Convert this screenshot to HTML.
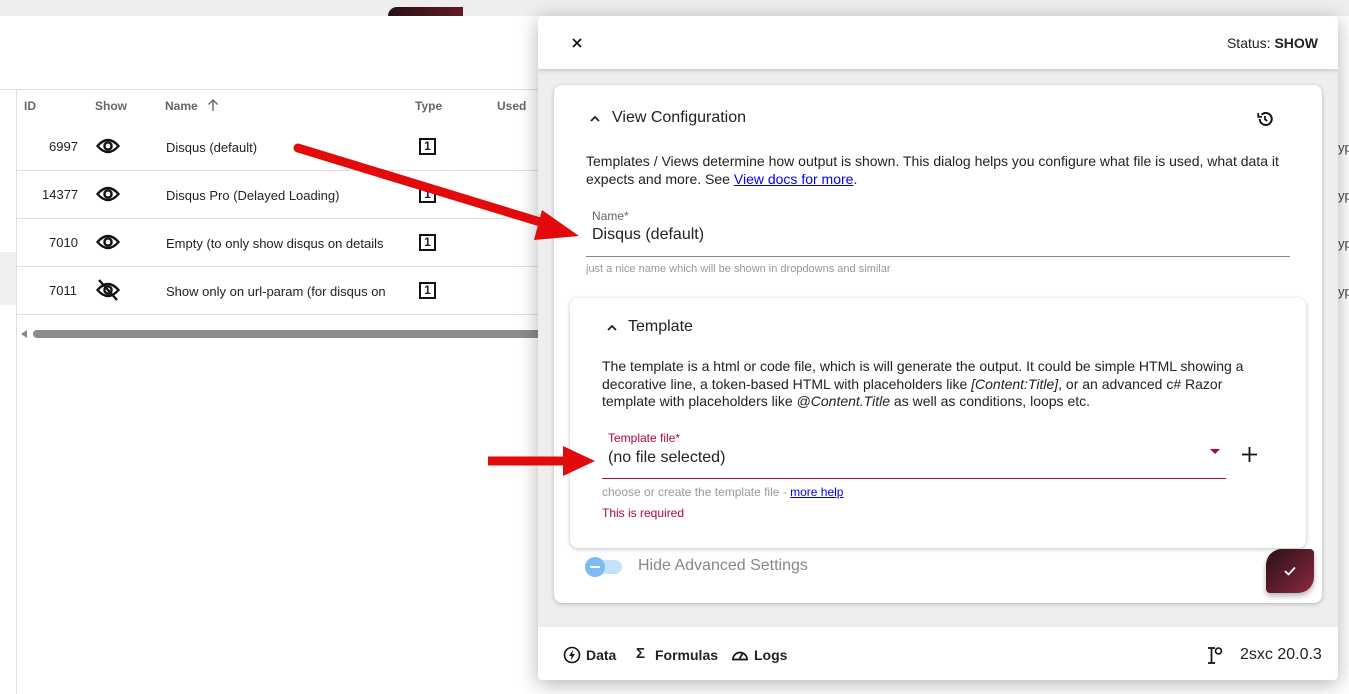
<!DOCTYPE html>
<html><head><meta charset="utf-8"><style>
*{box-sizing:border-box;margin:0;padding:0}
body{width:1349px;height:694px;overflow:hidden;background:#fff;font-family:"Liberation Sans",sans-serif;color:#222;position:relative}
.abs{position:absolute}
.t{font-size:13px;color:#222;white-space:nowrap}
.row{position:absolute;left:17px;width:540px;height:48px;border-bottom:1px solid #e0e0e0}
.box{position:absolute;left:419px;width:17px;height:17px;border:2px solid #111;font-size:12px;font-weight:bold;text-align:center;line-height:13px}
</style></head><body>
<div class="abs" style="left:0;top:0;width:1349px;height:16px;background:#eee"></div>
<div class="abs" style="left:388px;top:7px;width:75px;height:9px;background:linear-gradient(90deg,#2a0f14,#5e1b2b);border-top-left-radius:20px"></div>
<div class="abs" style="left:0;top:89px;width:540px;height:1px;background:#e0e0e0"></div>
<div class="abs" style="left:16px;top:90px;width:1px;height:604px;background:#e0e0e0"></div>
<div class="abs" style="left:0;top:252px;width:16px;height:53px;background:#f0f0f0"></div>
<div class="abs t" style="left:24px;top:99px;font-size:12px;font-weight:bold;color:#666">ID</div>
<div class="abs t" style="left:95px;top:99px;font-size:12px;font-weight:bold;color:#666">Show</div>
<div class="abs t" style="left:165px;top:99px;font-size:12px;font-weight:bold;color:#666">Name</div>
<svg class="abs" style="left:206px;top:98px" width="14" height="14" viewBox="0 0 14 14"><path d="M7 13V2M2.5 6.5L7 2l4.5 4.5" fill="none" stroke="#666" stroke-width="1.4"/></svg>
<div class="abs t" style="left:415px;top:99px;font-size:12px;font-weight:bold;color:#666">Type</div>
<div class="abs t" style="left:497px;top:99px;font-size:12px;font-weight:bold;color:#666">Used</div>
<div class="row" style="top:123px"></div><div class="row" style="top:171px"></div><div class="row" style="top:219px"></div><div class="row" style="top:267px"></div>
<div class="abs t" style="left:49px;top:139px">6997</div>
<div class="abs t" style="left:42px;top:187px">14377</div>
<div class="abs t" style="left:49px;top:235px">7010</div>
<div class="abs t" style="left:49px;top:283px">7011</div>
<svg class="abs" style="left:96px;top:135px" width="24" height="170" viewBox="0 0 24 170">
<g fill="none" stroke="#111" stroke-width="2.4">
<path d="M1.5 11Q12 -1 22.5 11Q12 23 1.5 11Z"/><circle cx="12" cy="11" r="3.6"/>
<path d="M1.5 59Q12 47 22.5 59Q12 71 1.5 59Z"/><circle cx="12" cy="59" r="3.6"/>
<path d="M1.5 107Q12 95 22.5 107Q12 119 1.5 107Z"/><circle cx="12" cy="107" r="3.6"/>
<path d="M1.5 155Q12 143 22.5 155Q12 167 1.5 155Z"/><circle cx="12" cy="155" r="3.6"/><line x1="3" y1="145" x2="21" y2="165"/>
</g></svg>
<div class="abs t" style="left:166px;top:140px">Disqus (default)</div>
<div class="abs t" style="left:166px;top:188px">Disqus Pro (Delayed Loading)</div>
<div class="abs t" style="left:166px;top:236px;width:219px;overflow:hidden">Empty (to only show disqus on details page)</div>
<div class="abs t" style="left:166px;top:284px;width:219px;overflow:hidden">Show only on url-param (for disqus on details)</div>
<div class="box" style="top:138px">1</div><div class="box" style="top:186px">1</div><div class="box" style="top:234px">1</div><div class="box" style="top:282px">1</div>
<div class="abs" style="left:21px;top:330px;width:0;height:0;border-top:4px solid transparent;border-bottom:4px solid transparent;border-right:6px solid #888"></div>
<div class="abs" style="left:33px;top:330px;width:510px;height:8px;border-radius:4px;background:#8c8c8c"></div>
<div class="abs t" style="left:1338px;top:140px;color:#444">yp</div>
<div class="abs t" style="left:1338px;top:188px;color:#444">yp</div>
<div class="abs t" style="left:1338px;top:236px;color:#444">yp</div>
<div class="abs t" style="left:1338px;top:284px;color:#444">yp</div>

<div class="abs" style="left:538px;top:16px;width:800px;height:664px;background:#eee;box-shadow:0 4px 20px rgba(0,0,0,.3);border-radius:4px;overflow:hidden">
 <div class="abs" style="left:0;top:0;width:800px;height:53px;background:#fff;box-shadow:0 2px 4px rgba(0,0,0,.15)"></div>
 <svg class="abs" style="left:34px;top:22px" width="10" height="10"><path d="M1 1L9 9M9 1L1 9" stroke="#111" stroke-width="1.8"/></svg>
 <div class="abs t" style="right:20px;top:19px;font-size:14px">Status: <b>SHOW</b></div>
 <div class="abs" style="left:0;top:611px;width:800px;height:53px;background:#fff"></div>
</div>
<div class="abs" style="left:554px;top:85px;width:768px;height:518px;background:#fff;border-radius:8px;box-shadow:0 1px 4px rgba(0,0,0,.25)"></div>
<svg class="abs" style="left:589px;top:113px" width="12" height="10"><path d="M2 8 L6 4 L10 8" fill="none" stroke="#222" stroke-width="1.8"/></svg>
<div class="abs t" style="left:612px;top:109px;font-size:16px">View Configuration</div>
<svg class="abs" style="left:1256px;top:110px" width="18" height="18" viewBox="0 0 24 24"><path d="M5 12a8 8 0 1 0 2.5-5.8" fill="none" stroke="#111" stroke-width="2.6"/><path d="M3 4v5h5" fill="none" stroke="#111" stroke-width="2.4"/><path d="M12 8v4.5l3 2" fill="none" stroke="#111" stroke-width="2.4"/></svg>
<div class="abs" style="left:586px;top:152px;width:710px;font-size:14px;line-height:18px">Templates / Views determine how output is shown. This dialog helps you configure what file is used, what data it expects and more. See <span style="color:#00e;text-decoration:underline">View docs for more</span>.</div>
<div class="abs t" style="left:592px;top:209px;font-size:12px;color:#666">Name*</div>
<div class="abs t" style="left:592px;top:226px;font-size:16px">Disqus (default)</div>
<div class="abs" style="left:586px;top:256px;width:704px;height:1px;background:#888"></div>
<div class="abs t" style="left:586px;top:263px;font-size:11px;color:#999">just a nice name which will be shown in dropdowns and similar</div>
<div class="abs" style="left:570px;top:298px;width:736px;height:250px;background:#fff;border-radius:8px;box-shadow:0 1px 4px rgba(0,0,0,.25)"></div>
<svg class="abs" style="left:606px;top:322px" width="12" height="10"><path d="M2 8 L6 4 L10 8" fill="none" stroke="#222" stroke-width="1.8"/></svg>
<div class="abs t" style="left:628px;top:318px;font-size:16px">Template</div>
<div class="abs" style="left:602px;top:358px;width:655px;font-size:14px;line-height:17.5px">The template is a html or code file, which is will generate the output. It could be simple HTML showing a decorative line, a token-based HTML with placeholders like <i>[Content:Title]</i>, or an advanced c# Razor template with placeholders like <i>@Content.Title</i> as well as conditions, loops etc.</div>
<div class="abs t" style="left:608px;top:431px;font-size:12px;color:#b0073c">Template file*</div>
<div class="abs t" style="left:608px;top:449px;font-size:16px">(no file selected)</div>
<div class="abs" style="left:1210px;top:449px;width:0;height:0;border-left:5px solid transparent;border-right:5px solid transparent;border-top:5px solid #b0073c"></div>
<svg class="abs" style="left:1242px;top:447px" width="15" height="15"><path d="M7.5 0V15M0 7.5H15" stroke="#111" stroke-width="1.8"/></svg>
<div class="abs" style="left:602px;top:478px;width:624px;height:1px;background:#b0073c"></div>
<div class="abs t" style="left:602px;top:485px;font-size:12px;color:#999">choose or create the template file - <span style="color:#00e;text-decoration:underline">more help</span></div>
<div class="abs t" style="left:602px;top:506px;font-size:12px;color:#b0073c">This is required</div>
<div class="abs" style="left:587px;top:560px;width:35px;height:14px;border-radius:7px;background:#c5e2fb"></div>
<div class="abs" style="left:585px;top:557px;width:20px;height:20px;border-radius:50%;background:#7bbcf5"><div style="margin:9px 5px;width:10px;height:2px;background:#fff"></div></div>
<div class="abs t" style="left:638px;top:557px;font-size:16px;color:#888">Hide Advanced Settings</div>
<div class="abs" style="left:1266px;top:549px;width:48px;height:44px;background:linear-gradient(135deg,#2a0f14,#8a2a40);border-radius:16px 4px 16px 4px;box-shadow:0 3px 6px rgba(0,0,0,.3)"></div>
<svg class="abs" style="left:1284px;top:566px" width="12" height="10"><path d="M1 5L4.5 8.5L11 1.5" fill="none" stroke="#fff" stroke-width="1.8"/></svg>
<svg class="abs" style="left:563px;top:646px" width="18" height="18" viewBox="0 0 18 18"><circle cx="9" cy="9" r="7.5" fill="none" stroke="#111" stroke-width="1.6"/><path d="M10 3.8 L6 10 H8.6 L7.8 14.2 L12 8 H9.3 Z" fill="#111"/></svg>
<div class="abs t" style="left:586px;top:647px;font-size:14px;font-weight:bold;color:#222">Data</div>
<div class="abs t" style="left:636px;top:645px;font-size:15px;font-weight:bold">Σ</div>
<div class="abs t" style="left:655px;top:647px;font-size:14px;font-weight:bold">Formulas</div>
<svg class="abs" style="left:731px;top:647px" width="18" height="15" viewBox="0 0 18 15"><path d="M2 12.5 A7 7 0 1 1 16 12.5 Z" fill="none" stroke="#111" stroke-width="1.7"/><path d="M8.5 11.5 L12 6" stroke="#111" stroke-width="1.7"/></svg>
<div class="abs t" style="left:754px;top:647px;font-size:14px;font-weight:bold">Logs</div>
<svg class="abs" style="left:1207px;top:646px" width="16" height="18" viewBox="0 0 16 18"><path d="M1 2H8M4.5 2V17M1 17H8" stroke="#111" stroke-width="1.7" fill="none"/><circle cx="11.5" cy="5" r="3" fill="none" stroke="#111" stroke-width="1.6"/></svg>
<div class="abs t" style="left:1240px;top:646px;font-size:16px">2sxc 20.0.3</div>
<svg class="abs" style="left:0;top:0" width="1349" height="694"><g fill="#e20a0a" stroke="none">
<line x1="298" y1="148" x2="550" y2="225" stroke="#e20a0a" stroke-width="9" stroke-linecap="round"/>
<polygon points="579,236 542,210 534,240"/>
<line x1="488" y1="461" x2="565" y2="461" stroke="#e20a0a" stroke-width="9"/>
<polygon points="595,461 563,446 563,476"/>
</g></svg>
</body></html>
